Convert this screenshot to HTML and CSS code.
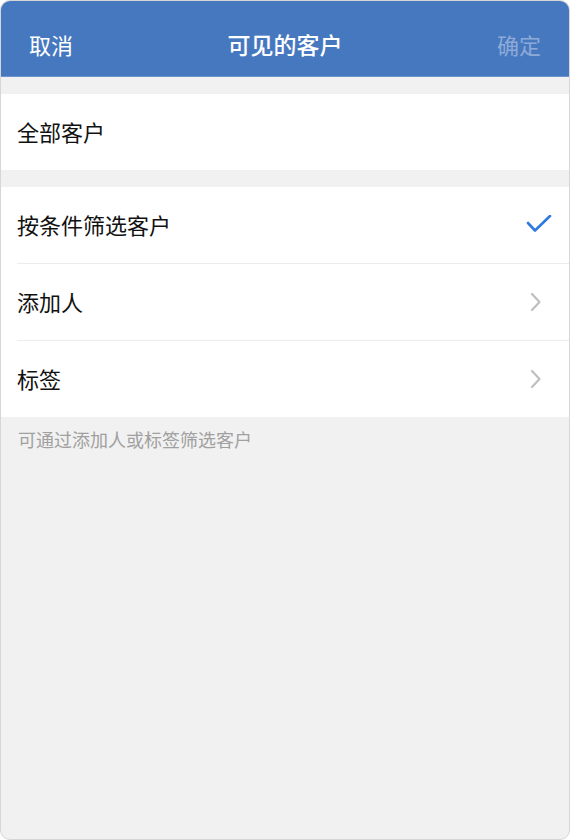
FILE: index.html
```html
<html lang="en">
<head>
  <meta charset="UTF-8">
  <meta name="viewport" content="width=device-width, initial-scale=1.0">
  <title>可见的客户</title>
  <link rel="stylesheet" href="styles.css">
</head>
<body>
  <div class="phone">
    <div class="header">
      <span class="header-btn">取消</span>
      <span class="header-title">可见的客户</span>
      <span class="header-btn disabled">确定</span>
    </div>

    <div class="group">
      <div class="row">
        <span class="row-label">全部客户</span>
      </div>
    </div>

    <div class="group">
      <div class="row">
        <span class="row-label">按条件筛选客户</span>
        <svg class="check" width="26" height="20" viewBox="0 0 26 20">
          <path d="M2 8 L9 15.5 L24 1" fill="none" stroke="#2f79df" stroke-width="2.6" stroke-linecap="round" stroke-linejoin="round"/>
        </svg>
      </div>
      <div class="row">
        <span class="row-label">添加人</span>
        <svg class="arrow" width="12" height="20" viewBox="0 0 12 20">
          <path d="M2 2 L9.5 10 L2 18" fill="none" stroke="#bfbfbf" stroke-width="2.2" stroke-linecap="round" stroke-linejoin="round"/>
        </svg>
      </div>
      <div class="row">
        <span class="row-label">标签</span>
        <svg class="arrow" width="12" height="20" viewBox="0 0 12 20">
          <path d="M2 2 L9.5 10 L2 18" fill="none" stroke="#bfbfbf" stroke-width="2.2" stroke-linecap="round" stroke-linejoin="round"/>
        </svg>
      </div>
    </div>

    <p class="note">可通过添加人或标签筛选客户</p>
  </div>
</body>
</html>
```

FILE: styles.css
```css
body {
    margin: 0;
    background-color: #ffffff;
    font-family: "Noto Sans CJK SC", "Noto Sans", sans-serif;
}

.phone {
    box-sizing: border-box;
    height: 840px;
    border: 1px solid #d6d6d6;
    border-radius: 10px;
    overflow: hidden;
    background-color: #f1f1f1;
}

.header {
    box-sizing: border-box;
    height: 76px;
    padding: 10px 28px 0 28px;
    display: flex;
    align-items: center;
    justify-content: space-between;
    background-color: #4678c0;
    border-bottom: 1px solid #6b93cc;
}

.header-btn {
    font-size: 22px;
    color: #ffffff;
    width: 60px;
}

.header-btn.disabled {
    color: #8eaad6;
    text-align: right;
}

.header-title {
    font-size: 23px;
    font-weight: 500;
    color: #ffffff;
}

.group {
    margin-top: 17px;
    background-color: #ffffff;
}

.row {
    box-sizing: border-box;
    height: 77px;
    margin-left: 16px;
    padding-right: 16px;
    padding-bottom: 3px;
    display: flex;
    align-items: center;
    justify-content: space-between;
    border-bottom: 1px solid #ececec;
}

.row:last-child {
    border-bottom: none;
    height: 76px;
}

.group:first-of-type .row {
    height: 75px;
}

.row-label {
    font-size: 22px;
    color: #111111;
}

.check {
    margin-right: 1px;
    margin-top: 2px;
}

.arrow {
    margin-right: 11px;
    margin-top: 2px;
}

.note {
    margin: 9px 0 0 17px;
    font-size: 18px;
    color: #a0a0a0;
}
```
